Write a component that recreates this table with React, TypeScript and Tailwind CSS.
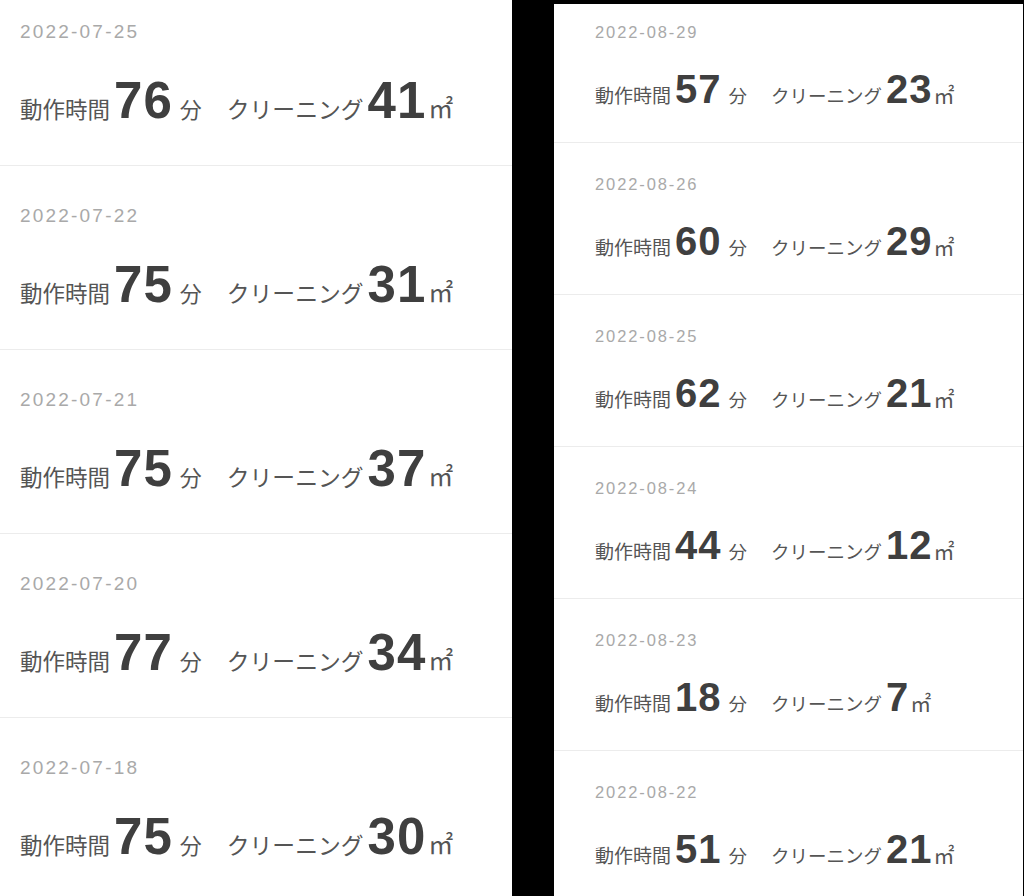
const left = [
  { date: '2022-07-25', mins: 76, area: 41 },
  { date: '2022-07-22', mins: 75, area: 31 },
  { date: '2022-07-21', mins: 75, area: 37 },
  { date: '2022-07-20', mins: 77, area: 34 },
  { date: '2022-07-18', mins: 75, area: 30 },
]

const right = [
  { date: '2022-08-29', mins: 57, area: 23 },
  { date: '2022-08-26', mins: 60, area: 29 },
  { date: '2022-08-25', mins: 62, area: 21 },
  { date: '2022-08-24', mins: 44, area: 12 },
  { date: '2022-08-23', mins: 18, area: 7 },
  { date: '2022-08-22', mins: 51, area: 21 },
]

const font = { fontFamily: '"Liberation Sans", "Noto Sans CJK JP", sans-serif' }

type Entry = { date: string; mins: number; area: number }

function LargeRow({ entry }: { entry: Entry }) {
  return (
    <div className="h-[184px] shrink-0 border-b border-[#ececec] pl-[20px]">
      <div className="pt-[40px] text-[19px] leading-none tracking-[2.2px] text-[#a9a9a9]">{entry.date}</div>
      <div className="mt-[34px] flex items-baseline text-[#555555]">
        <span className="text-[22.5px] leading-none">動作時間</span>
        <span className="ml-[4px] text-[51px] font-bold leading-none tracking-[1px] text-[#3f3f3f]">{entry.mins}</span>
        <span className="ml-[7px] text-[22px] leading-none">分</span>
        <span className="ml-[25px] text-[22.8px] leading-none">クリーニング</span>
        <span className="ml-[4px] text-[51px] font-bold leading-none tracking-[1px] text-[#3f3f3f]">{entry.area}</span>
        <span className="ml-[2px] text-[25px] leading-none">㎡</span>
      </div>
    </div>
  )
}

function SmallRow({ entry }: { entry: Entry }) {
  return (
    <div className="h-[152px] shrink-0 border-b border-[#ececec] pl-[41px]">
      <div className="pt-[33px] text-[16.5px] leading-none tracking-[1.9px] text-[#a9a9a9]">{entry.date}</div>
      <div className="mt-[28px] flex items-baseline text-[#555555]">
        <span className="text-[19px] leading-none">動作時間</span>
        <span className="ml-[4px] text-[40px] font-bold leading-none tracking-[1px] text-[#3f3f3f]">{entry.mins}</span>
        <span className="ml-[7px] text-[18.5px] leading-none">分</span>
        <span className="ml-[24px] text-[18.5px] leading-none">クリーニング</span>
        <span className="ml-[4px] text-[40px] font-bold leading-none tracking-[1px] text-[#3f3f3f]">{entry.area}</span>
        <span className="ml-[1px] text-[21px] leading-none">㎡</span>
      </div>
    </div>
  )
}

export default function App() {
  return (
    <div className="flex h-[896px] w-[1024px] overflow-hidden bg-black" style={font}>
      {/* July list */}
      <div className="flex w-[512px] shrink-0 flex-col overflow-hidden bg-white">
        <div className="-mt-[18px] flex flex-col">
          {left.map((e) => (
            <LargeRow key={e.date} entry={e} />
          ))}
        </div>
      </div>

      {/* August list */}
      <div className="ml-[42px] mt-[4px] flex w-[469px] shrink-0 flex-col overflow-hidden bg-white">
        <div className="-mt-[13px] flex flex-col">
          {right.map((e) => (
            <SmallRow key={e.date} entry={e} />
          ))}
        </div>
      </div>
    </div>
  )
}
